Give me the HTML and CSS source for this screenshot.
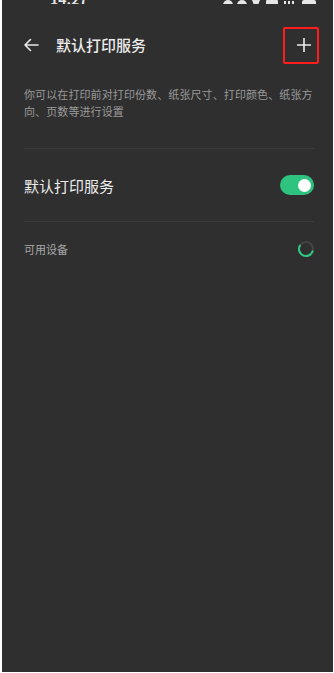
FILE: index.html
```html
<!DOCTYPE html>
<html lang="zh">
<head>
<meta charset="utf-8">
<link rel="stylesheet" href="styles.css">
</head>
<body>
<div class="frame">
  <div class="status">
    <span class="time">14:27</span>
    <span class="icons">
      <svg width="96" height="12" viewBox="0 0 96 12"><g fill="#e6e6e6"><circle cx="6" cy="6" r="5"/><circle cx="20" cy="6" r="5"/><path d="M30 1 h8 l-4 10z"/><rect x="44" y="1" width="12" height="10" rx="1"/><rect x="62" y="2" width="2" height="9"/><rect x="66" y="2" width="2" height="9"/><rect x="70" y="2" width="2" height="9"/><rect x="80" y="1" width="14" height="10" rx="2"/></g></svg>
    </span>
  </div>
  <header class="topbar">
    <svg class="back" width="16" height="14" viewBox="0 0 16 14"><path d="M15 7H2 M7.5 1.5L2 7l5.5 5.5" fill="none" stroke="#e8e8e8" stroke-width="1.6" stroke-linecap="round" stroke-linejoin="round"/></svg>
    <h1 class="title">默认打印服务</h1>
    <div class="add-box">
      <svg width="16" height="16" viewBox="0 0 16 16"><path d="M8 1v14M1 8h14" stroke="#ececec" stroke-width="1.6"/></svg>
    </div>
  </header>
  <p class="desc">你可以在打印前对打印份数、纸张尺寸、打印颜色、纸张方向、页数等进行设置</p>
  <div class="divider"></div>
  <div class="row">
    <span class="row-label">默认打印服务</span>
    <span class="toggle"><span class="knob"></span></span>
  </div>
  <div class="divider"></div>
  <div class="row small">
    <span class="section-label">可用设备</span>
    <svg class="spinner" width="18" height="18" viewBox="0 0 18 18"><circle cx="9" cy="9" r="7" fill="none" stroke="#444444" stroke-width="2"/><path d="M2.94 5.5 A7 7 0 1 0 15.58 11.39" fill="none" stroke="#2fc784" stroke-width="2" stroke-linecap="round"/></svg>
  </div>
</div>
</body>
</html>
```
FILE: styles.css
```css
html, body {
  margin: 0;
  padding: 0;
  background: #ffffff;
}
body {
  width: 334px;
  height: 673px;
  overflow: hidden;
  font-family: "Noto Sans CJK SC", "Noto Sans", sans-serif;
}
.frame {
  box-sizing: border-box;
  margin-left: 2px;
  width: 331px;
  height: 672px;
  background: #2f2f2f;
  overflow: hidden;
}
.status {
  height: 4px;
  overflow: hidden;
  position: relative;
}
.status .time {
  position: absolute;
  left: 48px;
  top: -11px;
  font-size: 14px;
  color: #e6e6e6;
  font-weight: 600;
}
.status .icons {
  position: absolute;
  left: 220px;
  top: -8px;
}
.topbar {
  display: flex;
  align-items: center;
  height: 36px;
  margin-top: 23px;
  padding: 0 14px 0 21px;
}
.back {
  flex: none;
}
.title {
  margin: 0 0 0 17px;
  font-size: 15px;
  font-weight: 500;
  color: #ececec;
  flex: 1;
  line-height: 20px;
}
.add-box {
  box-sizing: border-box;
  width: 36px;
  height: 37px;
  border: 2px solid #ff1c1c;
  border-radius: 2px;
  display: flex;
  align-items: center;
  justify-content: center;
  padding-left: 6px;
}
.desc {
  margin: 23px 19px 0 22px;
  font-size: 11px;
  line-height: 17px;
  color: #9a9a9a;
  letter-spacing: 0.1px;
}
.divider {
  height: 1px;
  background: #3b3b3b;
  margin: 0 19px 0 22px;
}
.desc + .divider {
  margin-top: 28px;
}
.row {
  display: flex;
  align-items: center;
  justify-content: space-between;
  height: 72px;
  padding: 0 19px 0 22px;
}
.row-label {
  font-size: 15px;
  color: #ececec;
}
.toggle {
  width: 34px;
  height: 20px;
  border-radius: 10px;
  background: #2ec37f;
  display: flex;
  align-items: center;
  justify-content: flex-end;
  padding-right: 3px;
  box-sizing: border-box;
}
.knob {
  width: 13px;
  height: 13px;
  border-radius: 50%;
  background: #ffffff;
}
.row.small {
  height: 54px;
}
.section-label {
  font-size: 11px;
  color: #a8a8a8;
}
.spinner {
  margin-right: -1px;
}
```
